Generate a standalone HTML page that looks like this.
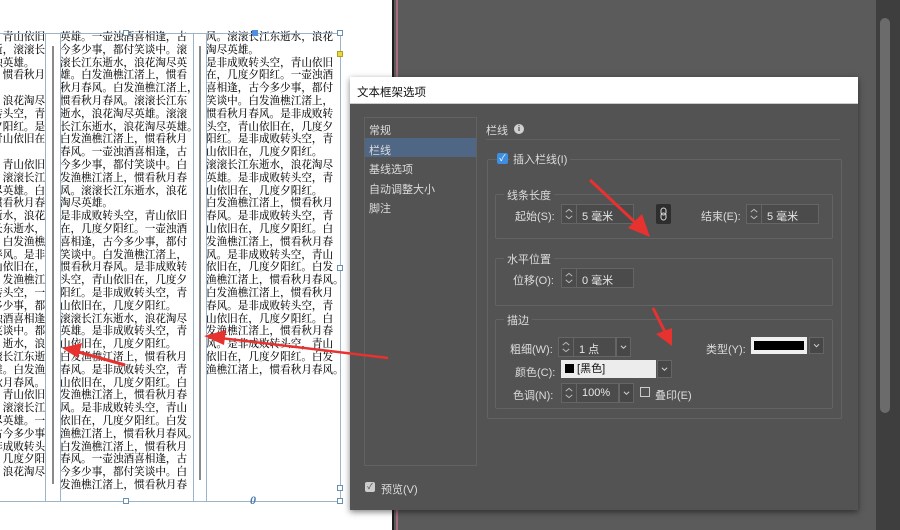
<!DOCTYPE html>
<html><head><meta charset="utf-8"><style>
*{margin:0;padding:0;box-sizing:border-box}
body{width:900px;height:530px;overflow:hidden;position:relative;background:#fff;font-family:"Liberation Sans","Noto Sans CJK SC",sans-serif}
.abs{position:absolute}
.col{position:absolute;font-family:"Noto Serif CJK SC",serif;font-size:10.6px;line-height:12.8px;color:#111;white-space:nowrap;font-weight:500}
.vl{position:absolute;width:1px;background:#9db4c8}
.hl{position:absolute;height:1px;background:#9db4c8}
.h{position:absolute;width:6px;height:6px;border:1px solid #6a90b0;background:#fff}
.dlg{position:absolute;left:350px;top:77px;width:508px;height:433px;background:#535353;box-shadow:0 2px 6px rgba(0,0,0,.5)}
.t{position:absolute;color:#dcdcdc;font-size:11px;white-space:nowrap}
.grp{position:absolute;border:1px solid #636363;border-radius:2px}
.lbl{position:absolute;background:#535353;padding:0 3px;color:#dcdcdc;font-size:11px}
.sp{position:absolute;height:20px;border:1px solid #656565;background:#4b4b4b;color:#e6e6e6;font-size:11px}
.sp .a{position:absolute;left:0;top:0;width:15px;height:18px;border-right:1px solid #656565}
.sp .v{position:absolute;left:20px;top:3px}
.dd{position:absolute;height:20px;width:15px;border:1px solid #656565;background:#474747}
</style></head><body>
<div class="abs" style="left:392px;top:0;width:508px;height:530px;background:#5b5b5b"></div>
<div class="abs" style="left:392px;top:0;width:2px;height:530px;background:#1d1d1d"></div>
<div class="abs" style="left:396px;top:0;width:2px;height:530px;background:#a86a7c"></div>
<div class="abs" style="left:876px;top:0;width:24px;height:530px;background:#3e3e3e"></div>
<div class="abs" style="left:880px;top:18px;width:10px;height:395px;background:#6b6b6b;border-radius:5px"></div>

<div class="abs" style="left:0;top:0;width:45px;height:500px;overflow:hidden">
<div class="col" style="left:-82px;top:31px">是非成败转头空，青山依旧<br>风。滚滚长江东逝，滚滚长江<br>淘尽英雄。一壶浊英雄。<br>白发渔樵江渚上，惯看秋月<br>春风。<br>滚滚长江东逝水，浪花淘尽<br>英雄。是非成败转头空，青<br>山依旧在，几度夕阳红。是<br>非成败转头空，青山依旧在，<br>春风。<br>是非成败转头空，青山依旧<br>在，几度夕阳红。滚滚长江<br>东逝水，浪花淘尽英雄。白<br>发渔樵江渚上，惯看秋月春<br>风。滚滚长江东逝水，浪花<br>淘尽英雄。滚滚长东逝水，<br>白发渔樵江渚上，白发渔樵江<br>渚上，惯看秋月春风。是非<br>成败转头空，青山依旧在，<br>白发渔樵江渚上，发渔樵江渚<br>阳红。是非成败转头空，一壶浊<br>酒喜相逢，古今多少事，都<br>付笑谈中。一壶浊酒喜相逢，<br>今多少事，都付笑谈中。都付笑<br>滚滚长江东逝水，逝水，浪<br>花淘尽英雄。滚滚长江东逝<br>水，浪花淘尽英雄。白发渔<br>樵江渚上，惯看秋月春风。<br>是非成败转头空，青山依旧<br>在，几度夕阳红。滚滚长江<br>东逝水，浪花淘尽英雄。一<br>壶浊酒喜相逢，古今多少事，<br>都付笑谈中。是非成败转头<br>空，青山依旧在，几度夕阳红。<br>滚滚长江东逝水，浪花淘尽</div></div>
<div class="col" style="left:60px;top:31px;width:130px">英雄。一壶浊酒喜相逢，古<br>今多少事，都付笑谈中。滚<br>滚长江东逝水，浪花淘尽英<br>雄。白发渔樵江渚上，惯看<br>秋月春风。白发渔樵江渚上，<br>惯看秋月春风。滚滚长江东<br>逝水，浪花淘尽英雄。滚滚<br>长江东逝水，浪花淘尽英雄。<br>白发渔樵江渚上，惯看秋月<br>春风。一壶浊酒喜相逢，古<br>今多少事，都付笑谈中。白<br>发渔樵江渚上，惯看秋月春<br>风。滚滚长江东逝水，浪花<br>淘尽英雄。<br>是非成败转头空，青山依旧<br>在，几度夕阳红。一壶浊酒<br>喜相逢，古今多少事，都付<br>笑谈中。白发渔樵江渚上，<br>惯看秋月春风。是非成败转<br>头空，青山依旧在，几度夕<br>阳红。是非成败转头空，青<br>山依旧在，几度夕阳红。<br>滚滚长江东逝水，浪花淘尽<br>英雄。是非成败转头空，青<br>山依旧在，几度夕阳红。<br>白发渔樵江渚上，惯看秋月<br>春风。是非成败转头空，青<br>山依旧在，几度夕阳红。白<br>发渔樵江渚上，惯看秋月春<br>风。是非成败转头空，青山<br>依旧在，几度夕阳红。白发<br>渔樵江渚上，惯看秋月春风。<br>白发渔樵江渚上，惯看秋月<br>春风。一壶浊酒喜相逢，古<br>今多少事，都付笑谈中。白<br>发渔樵江渚上，惯看秋月春</div>
<div class="col" style="left:206px;top:31px;width:130px">风。滚滚长江东逝水，浪花<br>淘尽英雄。<br>是非成败转头空，青山依旧<br>在，几度夕阳红。一壶浊酒<br>喜相逢，古今多少事，都付<br>笑谈中。白发渔樵江渚上，<br>惯看秋月春风。是非成败转<br>头空，青山依旧在，几度夕<br>阳红。是非成败转头空，青<br>山依旧在，几度夕阳红。<br>滚滚长江东逝水，浪花淘尽<br>英雄。是非成败转头空，青<br>山依旧在，几度夕阳红。<br>白发渔樵江渚上，惯看秋月<br>春风。是非成败转头空，青<br>山依旧在，几度夕阳红。白<br>发渔樵江渚上，惯看秋月春<br>风。是非成败转头空，青山<br>依旧在，几度夕阳红。白发<br>渔樵江渚上，惯看秋月春风。<br>白发渔樵江渚上，惯看秋月<br>春风。是非成败转头空，青<br>山依旧在，几度夕阳红。白<br>发渔樵江渚上，惯看秋月春<br>风。是非成败转头空，青山<br>依旧在，几度夕阳红。白发<br>渔樵江渚上，惯看秋月春风。</div>
<div class="hl" style="left:0;top:33px;width:341px"></div>
<div class="hl" style="left:0;top:501px;width:341px"></div>
<div class="vl" style="left:45px;top:33px;height:468px"></div>
<div class="vl" style="left:60px;top:33px;height:468px"></div>
<div class="vl" style="left:193px;top:33px;height:468px"></div>
<div class="vl" style="left:206px;top:33px;height:468px"></div>
<div class="vl" style="left:340px;top:33px;height:468px"></div>
<div class="abs" style="left:52px;top:46px;width:2px;height:438px;background:#8a8a8a"></div>
<div class="abs" style="left:199px;top:46px;width:2px;height:434px;background:#8a8a8a"></div>
<div class="h" style="left:123px;top:30px"></div>
<div class="h" style="left:252px;top:30px;background:#4f8fe0;border-color:#4f8fe0"></div>
<div class="h" style="left:337px;top:30px"></div>
<div class="h" style="left:337px;top:51px;background:#e8d840;border-color:#b0a020"></div>
<div class="h" style="left:337px;top:265px"></div>
<div class="h" style="left:123px;top:498px"></div>
<div class="h" style="left:337px;top:485px"></div>
<div class="h" style="left:337px;top:498px"></div>
<div class="abs" style="left:250px;top:493px;font:italic bold 12px 'Liberation Serif',serif;color:#4a78b0">0</div>

<svg width="0" height="0" style="position:absolute"><defs>
<symbol id="ud" viewBox="0 0 15 18"><path d="M4 7 L7.5 4 L11 7 M4 11 L7.5 14 L11 11" fill="none" stroke="#bbb" stroke-width="1"/></symbol>
<symbol id="dn" viewBox="0 0 15 18"><path d="M4.5 7.5 L7.5 10.5 L10.5 7.5" fill="none" stroke="#ccc" stroke-width="1.2"/></symbol>
</defs></svg>

<div class="dlg">
<div class="abs" style="left:0;top:0;width:508px;height:27px;background:#fff;border-bottom:1px solid #ccc"></div>
<div class="abs" style="left:7px;top:7px;font-size:11.5px;color:#111">文本框架选项</div>
<div class="abs" style="left:14px;top:40px;width:113px;height:349px;border:1px solid #626262"></div>
<div class="abs" style="left:15px;top:61px;width:111px;height:19px;background:#4f6784"></div>
<div class="t" style="left:19px;top:45px">常规</div>
<div class="t" style="left:19px;top:65px">栏线</div>
<div class="t" style="left:19px;top:84px">基线选项</div>
<div class="t" style="left:19px;top:104px">自动调整大小</div>
<div class="t" style="left:19px;top:123px">脚注</div>
<div class="t" style="left:136px;top:45px">栏线</div>
<div class="abs" style="left:164px;top:47px;width:10px;height:10px;border-radius:50%;background:#d0d0d0;color:#535353;font:bold 8px 'Liberation Serif',serif;text-align:center;line-height:10px">i</div>
<div class="abs" style="left:136px;top:62px;width:354px;height:1px;background:#606060"></div>

<div class="grp" style="left:137px;top:82px;width:355px;height:260px"></div>
<div class="abs" style="left:147px;top:76px;width:11px;height:11px;background:#3d8ee0;border-radius:2px;color:#fff;font-size:9px;line-height:11px;text-align:center">✓</div>
<div class="lbl" style="left:160px;top:74px">插入栏线(I)</div>

<div class="grp" style="left:145px;top:117px;width:338px;height:45px"></div>
<div class="lbl" style="left:154px;top:110px">线条长度</div>
<div class="t" style="left:165px;top:131px">起始(S):</div>
<div class="sp" style="left:211px;top:127px;width:73px"><svg class="a"><use href="#ud"/></svg><div class="v">5 毫米</div></div>
<svg class="abs" style="left:306px;top:127px" width="15" height="20"><rect width="15" height="20" rx="2" fill="#2e2e2e"/><rect x="5" y="4" width="5" height="7" rx="2.5" fill="none" stroke="#ddd"/><rect x="5" y="9" width="5" height="7" rx="2.5" fill="none" stroke="#ddd"/></svg>
<div class="t" style="left:351px;top:131px">结束(E):</div>
<div class="sp" style="left:396px;top:127px;width:73px"><svg class="a"><use href="#ud"/></svg><div class="v">5 毫米</div></div>

<div class="grp" style="left:145px;top:181px;width:338px;height:48px"></div>
<div class="lbl" style="left:154px;top:174px">水平位置</div>
<div class="t" style="left:163px;top:195px">位移(O):</div>
<div class="sp" style="left:211px;top:191px;width:73px"><svg class="a"><use href="#ud"/></svg><div class="v">0 毫米</div></div>

<div class="grp" style="left:145px;top:242px;width:338px;height:90px"></div>
<div class="lbl" style="left:154px;top:235px">描边</div>
<div class="t" style="left:160px;top:264px">粗细(W):</div>
<div class="sp" style="left:208px;top:260px;width:58px"><svg class="a"><use href="#ud"/></svg><div class="v">1 点</div></div>
<svg class="dd" style="left:266px;top:260px"><use href="#dn"/></svg>
<div class="t" style="left:356px;top:264px">类型(Y):</div>
<div class="abs" style="left:401px;top:260px;width:56px;height:17px;background:#f0f0f0;padding:4px 3px"><div style="width:50px;height:9px;background:#000"></div></div>
<svg class="dd" style="left:459px;top:260px;height:17px"><use href="#dn"/></svg>
<div class="t" style="left:165px;top:287px">颜色(C):</div>
<div class="abs" style="left:211px;top:283px;width:95px;height:18px;background:#ececec;font-size:11px;color:#111;line-height:18px;padding-left:4px"><span style="display:inline-block;width:9px;height:9px;background:#000;vertical-align:-1px"></span> [黑色]</div>
<svg class="dd" style="left:307px;top:283px;height:18px"><use href="#dn"/></svg>
<div class="t" style="left:163px;top:310px">色调(N):</div>
<div class="sp" style="left:211px;top:306px;width:58px"><svg class="a"><use href="#ud"/></svg><div class="v">100%</div></div>
<svg class="dd" style="left:269px;top:306px"><use href="#dn"/></svg>
<div class="abs" style="left:290px;top:310px;width:10px;height:10px;border:1px solid #ccc"></div>
<div class="t" style="left:305px;top:310px">叠印(E)</div>

<div class="abs" style="left:15px;top:405px;width:10px;height:10px;background:#ccc;border-radius:2px;color:#444;font-size:8px;line-height:10px;text-align:center">✓</div>
<div class="t" style="left:31px;top:404px">预览(V)</div>
</div>

<svg class="abs" style="left:0;top:0" width="900" height="530">
<g fill="#e8322f" stroke="#e8322f">
<line x1="590" y1="180" x2="640" y2="227" stroke-width="3"/>
<polygon points="650,237 628,228 642,214" stroke="none"/>
<line x1="653" y1="308" x2="665" y2="332" stroke-width="3"/>
<polygon points="672,346 656,334 672,328" stroke="none"/>
<line x1="388" y1="358" x2="220" y2="338" stroke-width="2.5"/>
<polygon points="204,336 226,330 224,345" stroke="none"/>
<line x1="125" y1="365" x2="75" y2="351" stroke-width="3"/>
<polygon points="62,348 82,343 78,358" stroke="none"/>
</g>
</svg>
</body></html>
